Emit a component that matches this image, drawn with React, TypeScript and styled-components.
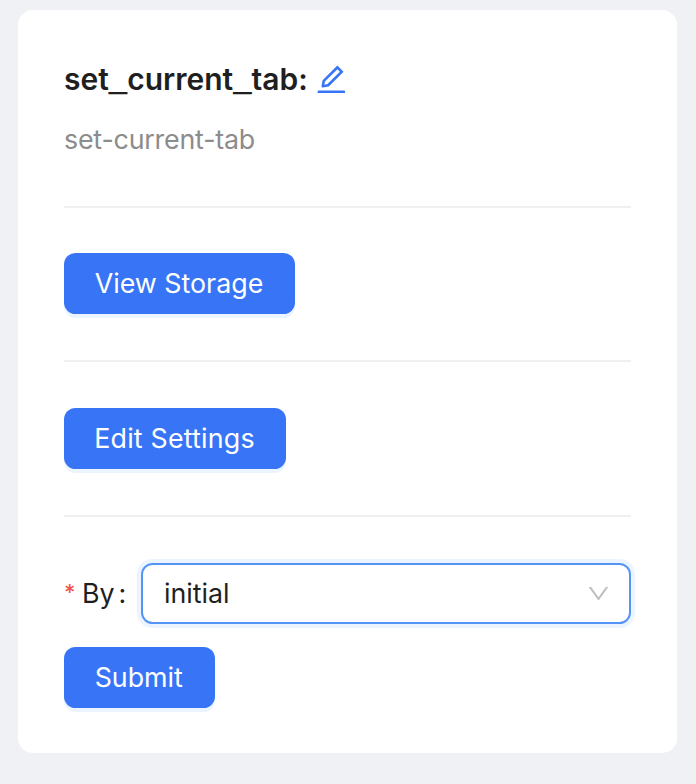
import React from "react";
import styled, { createGlobalStyle } from "styled-components";

const GlobalStyle = createGlobalStyle`
  * { box-sizing: border-box; }
  body { margin: 0; background: #eff1f5; font-family: Inter, "Liberation Sans", sans-serif; }
`;

const Page = styled.main`
  height: 784px;
  padding: 10px 19px 31px 18px;
  background: #eff1f5;
`;

const Card = styled.section`
  height: 743px;
  padding: 46px 46px 0;
  background: #fff;
  border-radius: 15px;
`;

const Text = styled.span<{ $spacing?: number }>`
  display: inline-block;
  letter-spacing: ${(p) => p.$spacing ?? 0}px;
  white-space: nowrap;
`;

const Underscore = styled.span`
  font-family: "Liberation Sans", sans-serif;
  font-size: 33px;
  font-weight: 700;
  line-height: 1;
  text-shadow: 0 -1px 0 #1f1f1f;
`;

const Title = styled.h1`
  display: flex;
  align-items: center;
  gap: 9px;
  height: 46px;
  margin: 0;
  color: #1f1f1f;
  font-size: 30px;
  font-weight: 600;
  line-height: 46px;
`;

const TitleText = styled.span`
  width: 243px;
  white-space: nowrap;
`;

const Description = styled.p`
  height: 42px;
  margin: 16px 0 0;
  color: #8c8c8c;
  font-size: 26.8px;
  line-height: 42px;
`;

const Divider = styled.hr<{ $after: number }>`
  height: 2px;
  margin: 46px 0 ${(p) => p.$after}px;
  border: 0;
  background: #f0f0f0;
`;

const Button = styled.button<{ $width: number }>`
  display: flex;
  align-items: center;
  justify-content: center;
  width: ${(p) => p.$width}px;
  height: 61px;
  padding: 0 1px 1px 0;
  border: 0;
  border-radius: 11.5px;
  background: #3875f6;
  box-shadow: 0 4px 0 #ebf4ff;
  color: #fff;
  font: 400 26.8px Inter, "Liberation Sans", sans-serif;
`;

const Field = styled.div`
  display: flex;
  align-items: center;
  height: 61px;
  margin-bottom: 23px;
  color: #1f1f1f;
  font-size: 26.8px;
`;

const Label = styled.label`
  display: flex;
  align-items: center;
  width: 77px;
`;

const Required = styled.span`
  width: 18px;
  color: #f0544f;
  font-size: 22px;
  font-weight: 500;
  line-height: 28px;
  padding-bottom: 3px;
`;

const Colon = styled.span`
  margin-left: 4px;
`;

const Select = styled.div`
  display: flex;
  align-items: center;
  justify-content: space-between;
  flex: 1;
  height: 61px;
  padding: 0 19px 0 21px;
  border: 2px solid #5594f7;
  border-radius: 11.5px;
  box-shadow: 0 0 0 4px #ebf4ff;
`;

const EditIcon = () => (
  <svg width="30.7" height="30.7" viewBox="64 64 896 896" fill="#3875f6">
    <path d="M257.7 752c2 0 4-.2 6-.5L431.9 722c2-.4 3.9-1.3 5.3-2.8l423.9-423.9a9.96 9.96 0 000-14.1L694.9 114.9c-1.9-1.9-4.4-2.9-7.1-2.9s-5.2 1-7.1 2.9L256.8 538.8c-1.5 1.5-2.4 3.3-2.8 5.3l-29.5 168.2a33.5 33.5 0 009.4 29.8c6.6 6.4 14.9 9.9 23.8 9.9zm67.4-174.4L687.8 215l73.3 73.3-362.7 362.6-88.9 15.7 15.6-89zM880 836H144c-17.7 0-32 14.3-32 32v36c0 4.4 3.6 8 8 8h784c4.4 0 8-3.6 8-8v-36c0-17.7-14.3-32-32-32z" />
  </svg>
);

const DownIcon = () => (
  <svg width="23" height="23" viewBox="64 64 896 896" fill="#bfbfbf">
    <path d="M884 256h-75c-5.1 0-9.9 2.5-12.9 6.6L512 654.2 227.9 262.6c-3-4.1-7.8-6.6-12.9-6.6h-75c-6.5 0-10.3 7.4-6.5 12.7l352.6 486.1c12.8 17.6 39 17.6 51.7 0l352.6-486.1c3.9-5.3.1-12.7-6.4-12.7z" />
  </svg>
);

export default function App() {
  return (
    <>
      <GlobalStyle />
      <Page>
        <Card>
          <Title>
            <TitleText>
              set<Underscore>_</Underscore>current<Underscore>_</Underscore>tab:
            </TitleText>
            <EditIcon />
          </Title>
          <Description>
            <Text $spacing={-0.2}>set-current-tab</Text>
          </Description>
          <Divider $after={45} />
          <Button $width={231}>
            <Text>View Storage</Text>
          </Button>
          <Divider $after={46} />
          <Button $width={222}>
            <Text $spacing={0.2}>Edit Settings</Text>
          </Button>
          <Divider $after={45.5} />
          <Field>
            <Label>
              <Required>*</Required>
              <Text>By</Text>
              <Colon>:</Colon>
            </Label>
            <Select>
              <Text>initial</Text>
              <DownIcon />
            </Select>
          </Field>
          <Button $width={150.5}>
            <Text>Submit</Text>
          </Button>
        </Card>
      </Page>
    </>
  );
}
